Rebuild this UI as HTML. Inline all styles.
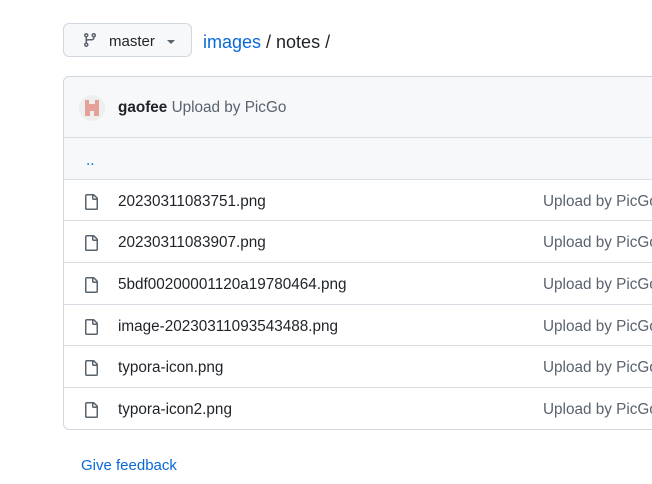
<!DOCTYPE html>
<html><head><style>
body{margin:0;width:652px;height:484px;overflow:hidden;background:#fff;font-family:"Liberation Sans",sans-serif;color:#1f2328;position:relative}
.abs{position:absolute}
.btn{left:63px;top:23px;width:129px;height:34px;border:1px solid #d0d7de;border-radius:6px;background:#f6f8fa;box-sizing:border-box}
.box{left:63px;top:76px;width:620px;height:354px;border:1px solid #d0d7de;border-radius:6px;box-sizing:border-box;overflow:hidden}
.row{position:absolute;left:0;right:0;height:41px;border-top:1px solid #d8dee4;font-size:15.3px}
.row .n{position:absolute;left:54px;top:13px}
.row .m{position:absolute;left:479px;top:13px;color:#59636e}
.row svg{position:absolute;left:19px;top:14px}
</style></head><body>
<div class="abs btn">
<svg class="abs" style="left:18px;top:8px" width="16" height="16" viewBox="0 0 16 16" fill="#59636e"><path d="M9.5 3.25a2.25 2.25 0 1 1 3 2.122V6A2.5 2.5 0 0 1 10 8.5H6a1 1 0 0 0-1 1v1.128a2.251 2.251 0 1 1-1.5 0V5.372a2.25 2.25 0 1 1 1.5 0v1.836A2.5 2.5 0 0 1 6 7h4a1 1 0 0 0 1-1v-.628A2.25 2.25 0 0 1 9.5 3.25Zm-6 0a.75.75 0 1 0 1.5 0 .75.75 0 0 0-1.5 0Zm8.250-.75a.75.75 0 1 0 0 1.5.75.75 0 0 0 0-1.5ZM4.25 12a.75.75 0 1 0 0 1.5.75.75 0 0 0 0-1.5Z"/></svg>
<span class="abs" style="left:45px;top:9px;font-size:15px">master</span>
<span class="abs" style="left:103px;top:16px;width:0;height:0;border-left:4px solid transparent;border-right:4px solid transparent;border-top:4px solid #59636e"></span>
</div>
<div class="abs" style="left:203px;top:32px;font-size:18px"><span style="color:#0969da">images</span> / notes /</div>
<div class="abs box">
<div style="position:absolute;left:0;right:0;top:0;height:61px;background:#f6f8fa">
<div class="abs" style="left:15px;top:18px;width:26px;height:26px;border-radius:50%;background:#eee;overflow:hidden">
<svg width="26" height="26" viewBox="0 0 26 26"><path d="M6 5h4v4h6V5h4v16h-5v-5h-4v5H6z" fill="#e5a098"/></svg></div>
<div class="abs" style="left:54px;top:22px;font-size:15.3px"><b>gaofee</b> <span style="color:#59636e">Upload by PicGo</span></div>
</div>
<div class="row" style="top:60px;background:#f6f8fa"><span class="abs" style="left:22px;top:14px;color:#0969da">..</span></div>
<div class="row" style="top:102px"><svg width="16" height="16" viewBox="0 0 16 16" fill="#59636e"><path d="M2 1.75C2 .784 2.784 0 3.75 0h6.586c.464 0 .909.184 1.237.513l2.914 2.914c.329.328.513.773.513 1.237v9.586A1.75 1.75 0 0 1 13.25 16h-9.5A1.75 1.75 0 0 1 2 14.25Zm1.75-.25a.25.25 0 0 0-.25.25v12.5c0 .138.112.25.25.25h9.5a.25.25 0 0 0 .25-.25V6h-2.75A1.75 1.75 0 0 1 9 4.25V1.5Zm6.75.062V4.25c0 .138.112.25.25.25h2.688l-.011-.013-2.914-2.914-.013-.011Z"/></svg><span class="n">20230311083751.png</span><span class="m">Upload by PicGo</span></div>
<div class="row" style="top:143px"><svg width="16" height="16" viewBox="0 0 16 16" fill="#59636e"><path d="M2 1.75C2 .784 2.784 0 3.75 0h6.586c.464 0 .909.184 1.237.513l2.914 2.914c.329.328.513.773.513 1.237v9.586A1.75 1.75 0 0 1 13.25 16h-9.5A1.75 1.75 0 0 1 2 14.25Zm1.75-.25a.25.25 0 0 0-.25.25v12.5c0 .138.112.25.25.25h9.5a.25.25 0 0 0 .25-.25V6h-2.75A1.75 1.75 0 0 1 9 4.25V1.5Zm6.75.062V4.25c0 .138.112.25.25.25h2.688l-.011-.013-2.914-2.914-.013-.011Z"/></svg><span class="n">20230311083907.png</span><span class="m">Upload by PicGo</span></div>
<div class="row" style="top:185px"><svg width="16" height="16" viewBox="0 0 16 16" fill="#59636e"><path d="M2 1.75C2 .784 2.784 0 3.75 0h6.586c.464 0 .909.184 1.237.513l2.914 2.914c.329.328.513.773.513 1.237v9.586A1.75 1.75 0 0 1 13.25 16h-9.5A1.75 1.75 0 0 1 2 14.25Zm1.75-.25a.25.25 0 0 0-.25.25v12.5c0 .138.112.25.25.25h9.5a.25.25 0 0 0 .25-.25V6h-2.75A1.75 1.75 0 0 1 9 4.25V1.5Zm6.75.062V4.25c0 .138.112.25.25.25h2.688l-.011-.013-2.914-2.914-.013-.011Z"/></svg><span class="n">5bdf00200001120a19780464.png</span><span class="m">Upload by PicGo</span></div>
<div class="row" style="top:227px"><svg width="16" height="16" viewBox="0 0 16 16" fill="#59636e"><path d="M2 1.75C2 .784 2.784 0 3.75 0h6.586c.464 0 .909.184 1.237.513l2.914 2.914c.329.328.513.773.513 1.237v9.586A1.75 1.75 0 0 1 13.25 16h-9.5A1.75 1.75 0 0 1 2 14.25Zm1.75-.25a.25.25 0 0 0-.25.25v12.5c0 .138.112.25.25.25h9.5a.25.25 0 0 0 .25-.25V6h-2.75A1.75 1.75 0 0 1 9 4.25V1.5Zm6.75.062V4.25c0 .138.112.25.25.25h2.688l-.011-.013-2.914-2.914-.013-.011Z"/></svg><span class="n">image-20230311093543488.png</span><span class="m">Upload by PicGo</span></div>
<div class="row" style="top:268px"><svg width="16" height="16" viewBox="0 0 16 16" fill="#59636e"><path d="M2 1.75C2 .784 2.784 0 3.75 0h6.586c.464 0 .909.184 1.237.513l2.914 2.914c.329.328.513.773.513 1.237v9.586A1.75 1.75 0 0 1 13.25 16h-9.5A1.75 1.75 0 0 1 2 14.25Zm1.75-.25a.25.25 0 0 0-.25.25v12.5c0 .138.112.25.25.25h9.5a.25.25 0 0 0 .25-.25V6h-2.75A1.75 1.75 0 0 1 9 4.25V1.5Zm6.75.062V4.25c0 .138.112.25.25.25h2.688l-.011-.013-2.914-2.914-.013-.011Z"/></svg><span class="n">typora-icon.png</span><span class="m">Upload by PicGo</span></div>
<div class="row" style="top:310px"><svg width="16" height="16" viewBox="0 0 16 16" fill="#59636e"><path d="M2 1.75C2 .784 2.784 0 3.75 0h6.586c.464 0 .909.184 1.237.513l2.914 2.914c.329.328.513.773.513 1.237v9.586A1.75 1.75 0 0 1 13.25 16h-9.5A1.75 1.75 0 0 1 2 14.25Zm1.75-.25a.25.25 0 0 0-.25.25v12.5c0 .138.112.25.25.25h9.5a.25.25 0 0 0 .25-.25V6h-2.75A1.75 1.75 0 0 1 9 4.25V1.5Zm6.75.062V4.25c0 .138.112.25.25.25h2.688l-.011-.013-2.914-2.914-.013-.011Z"/></svg><span class="n">typora-icon2.png</span><span class="m">Upload by PicGo</span></div>
</div>
<div class="abs" style="left:81px;top:457px;font-size:15px;color:#0969da">Give feedback</div>
</body></html>
